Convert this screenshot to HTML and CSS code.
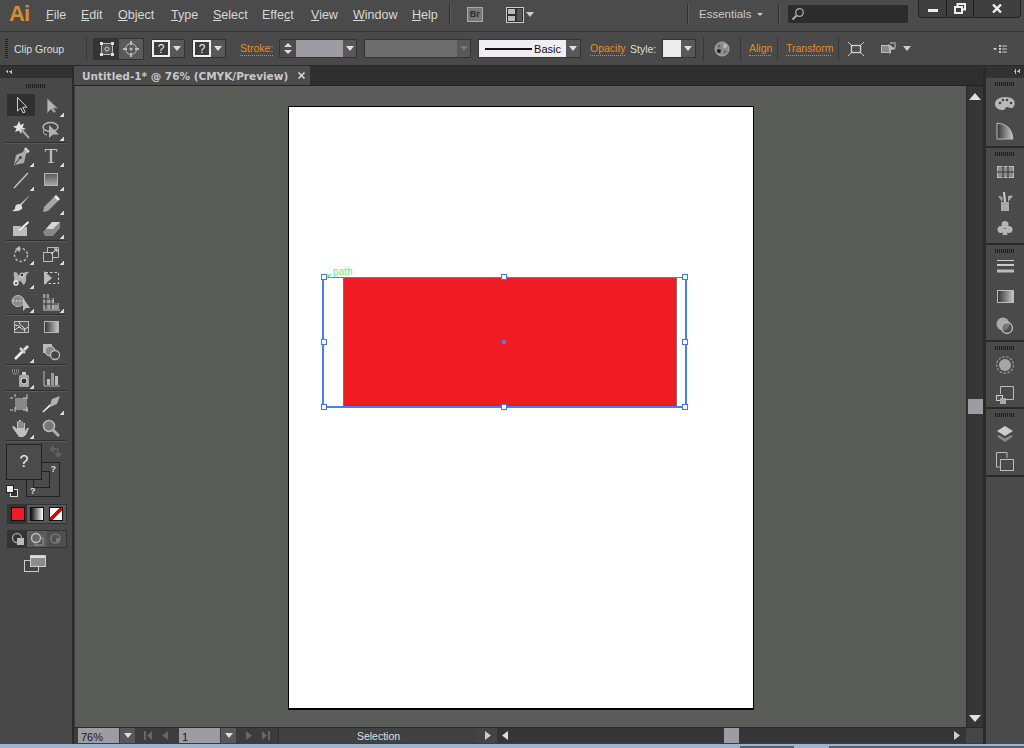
FILE: index.html
```html
<!DOCTYPE html>
<html lang="en">
<head>
<meta charset="utf-8">
<title>Adobe Illustrator</title>
<link rel="stylesheet" href="styles.css">
</head>
<body>
<svg class="defs" width="0" height="0"><defs>
<linearGradient id="gv" x1="0" y1="0" x2="0" y2="1"><stop offset="0" stop-color="#5a5a5a"/><stop offset="1" stop-color="#a8a8a8"/></linearGradient>
<linearGradient id="gh" x1="0" y1="0" x2="1" y2="0"><stop offset="0" stop-color="#333"/><stop offset="1" stop-color="#c8c8c8"/></linearGradient>
</defs></svg>
<div class="app">
<header class="menubar">
  <span class="logo">Ai</span>
  <nav class="menu">
    <span><u>F</u>ile</span><span><u>E</u>dit</span><span><u>O</u>bject</span><span><u>T</u>ype</span><span><u>S</u>elect</span><span>Effe<u>c</u>t</span><span><u>V</u>iew</span><span><u>W</u>indow</span><span><u>H</u>elp</span>
  </nav>
  <i class="vsep first"></i>
  <span class="br">Br</span>
  <svg class="layout" width="18" height="16" viewBox="0 0 18 16"><rect x=".5" y=".5" width="17" height="15" fill="#2f2f2f" stroke="#ccc"/><rect x="2" y="2" width="7" height="5" fill="#bbb"/><rect x="2" y="9" width="7" height="5" fill="#bbb"/><rect x="11" y="2" width="5" height="12" fill="#555"/></svg>
  <i class="tri wide"></i>
  <span class="spacer"></span>
  <i class="vsep"></i>
  <span class="workspace">Essentials</span>
  <i class="tri small"></i>
  <i class="vsep ws"></i>
  <div class="search"><svg width="14" height="14" viewBox="0 0 14 14"><circle cx="8.500" cy="5.500" r="3.800" fill="none" stroke="#aaa" stroke-width="1.300"/><path d="M5.500 8.500 1.500 12.500" stroke="#aaa" stroke-width="2"/></svg></div>
  <div class="winbtns">
    <span class="wb min"><i></i></span>
    <span class="wb res"><svg width="12" height="11" viewBox="0 0 12 11"><path d="M3.500 3V1H11V6.500H8" fill="none" stroke="#eee" stroke-width="2"/><rect x="1" y="4" width="7" height="6" fill="none" stroke="#eee" stroke-width="2"/></svg></span>
    <span class="wb cls"><svg width="10" height="9" viewBox="0 0 10 9"><path d="M1 0.500 9 8.500M9 0.500 1 8.500" stroke="#eee" stroke-width="2.400"/></svg></span>
  </div>
</header>

<section class="control">
  <i class="grip-v"></i>
  <span class="label clip">Clip Group</span>
  <i class="csep s1"></i>
  <div class="seg">
    <span class="seg-a"><svg width="16" height="16" viewBox="0 0 16 16"><rect x="2.500" y="2.500" width="11" height="11" rx="2" fill="#555" stroke="#bbb"/><circle cx="8" cy="8" r="2" fill="none" stroke="#ccc"/><path d="M1 1h3v3H1zM12 1h3v3h-3zM1 12h3v3H1zM12 12h3v3h-3z" fill="#ddd"/></svg></span>
    <span class="seg-b"><svg width="16" height="16" viewBox="0 0 16 16"><circle cx="8" cy="8" r="5.500" fill="none" stroke="#bbb"/><circle cx="8" cy="8" r="1.500" fill="#bbb"/><path d="M7 0h2v4H7zM7 12h2v4H7zM0 7h4v2H0zM12 7h4v2h-4z" fill="#bbb"/></svg></span>
  </div>
  <div class="qbox q1"><b>?</b><span class="dd"><i class="tri"></i></span></div>
  <div class="qbox q2"><b>?</b><span class="dd"><i class="tri"></i></span></div>
  <span class="link stroke">Stroke:</span>
  <div class="combo c-stroke">
    <span class="spin"><i class="tri up"></i><i class="tri"></i></span>
    <span class="cfield"></span>
    <span class="dd"><i class="tri"></i></span>
  </div>
  <div class="combo c-off">
    <span class="cfield off"></span>
    <span class="dd"><i class="tri dim"></i></span>
  </div>
  <div class="combo c-profile">
    <span class="profile"><i></i><em>Basic</em></span>
    <span class="dd"><i class="tri"></i></span>
  </div>
  <span class="link opacity">Opacity</span>
  <span class="label style">Style:</span>
  <div class="combo c-style"><span class="swatch"></span><span class="dd"><i class="tri"></i></span></div>
  <i class="csep s2"></i>
  <svg class="globe" width="16" height="16" viewBox="0 0 16 16"><circle cx="8" cy="8" r="7" fill="#8d8d8d" stroke="#aaa"/><circle cx="5" cy="10" r="2" fill="#222"/><circle cx="11" cy="5" r="2" fill="#bbb"/><circle cx="5" cy="5" r="1.500" fill="#666"/><circle cx="11" cy="11" r="1.500" fill="#666"/></svg>
  <i class="csep s3"></i>
  <span class="link align">Align</span>
  <i class="csep s4"></i>
  <span class="link transform">Transform</span>
  <i class="csep s5"></i>
  <svg class="ct1" width="16" height="14" viewBox="0 0 16 14"><rect x="3.500" y="3.500" width="9" height="7" fill="none" stroke="#ccc" stroke-width="1.400"/><path d="M0 0 3 3M16 0 13 3M0 14 3 11M16 14 13 11" stroke="#ccc"/></svg>
  <svg class="ct2" width="18" height="14" viewBox="0 0 18 14"><rect x="1.500" y="3.500" width="9" height="7" fill="#888" stroke="#bbb"/><path d="M10 1h5v5" fill="none" stroke="#888" stroke-width="2"/><path d="M8 2 16 7 11 8 10 13z" fill="#bbb"/></svg>
  <i class="tri big"></i>
  <svg class="cmenu" width="14" height="8" viewBox="0 0 14 8"><path d="M0 3h4L2 5.500z" fill="#ccc"/><path d="M6 0h2v2H6zM6 3h2v2H6zM6 6h2v2H6z" fill="#ccc"/><path d="M9 1h5M9 4h5M9 7h5" stroke="#ccc"/></svg>
</section>

<main class="work">
  <aside class="toolpanel">
    <div class="phead"><i class="chev"></i></div>
    <div class="pgrip"><i class="grip-h"></i></div>
    <div class="tools">
      <div class="trow tall">
        <span class="tool active"><svg width="20" height="20" viewBox="0 0 20 20"><path d="M6.500 2.500V16l3.300-3 2.300 5 2-1-2.300-4.800H16z" fill="#2b2b2b" stroke="#cfcfcf"/></svg></span>
        <span class="tool more"><svg width="20" height="20" viewBox="0 0 20 20"><path d="M6.500 3V16.500l3.500-3.500 3 3.500 1.500-1-2.700-3.500h4.500z" fill="#b4b4b4" stroke="#8a8a8a"/></svg></span>
      </div>
      <div class="trow">
        <span class="tool"><svg width="20" height="20" viewBox="0 0 20 20"><path d="M8 1 9.500 5 13 3.500 11.500 7.500 15 9 11 10 10 14 8 10.500 4 12 5.500 8.500 2 6.500 6 5.500z" fill="#e4e4e4"/><path d="M10 9 18 18" stroke="#aaa" stroke-width="2"/></svg></span>
        <span class="tool more"><svg width="20" height="20" viewBox="0 0 20 20"><ellipse cx="9.500" cy="7" rx="7.500" ry="4.500" fill="none" stroke="#bbb" stroke-width="1.400"/><path d="M8 5V18L12 14.500H18z" fill="#b0b0b0"/><path d="M3 10q-2 4 3 5" fill="none" stroke="#bbb"/></svg></span>
      </div>
      <i class="tsep"></i>
      <div class="trow">
        <span class="tool more"><svg width="20" height="20" viewBox="0 0 20 20"><path d="M14 2 18 6 15 8 13 17 3 19 5 9 12 6z" fill="#ababab"/><path d="M4 18 9 12" stroke="#333"/><circle cx="9.500" cy="11.500" r="1.300" fill="#333"/><path d="M14 2 18 6" stroke="#ddd" stroke-width="2"/></svg></span>
        <span class="tool more t-text">T</span>
      </div>
      <div class="trow">
        <span class="tool more"><svg width="20" height="20" viewBox="0 0 20 20"><path d="M3 18 17 3" stroke="#c8c8c8" stroke-width="1.300"/></svg></span>
        <span class="tool more"><svg width="20" height="20" viewBox="0 0 20 20"><rect x="3.500" y="3.500" width="13" height="12" fill="url(#gv)" stroke="#b5b5b5"/></svg></span>
      </div>
      <div class="trow">
        <span class="tool"><svg width="20" height="20" viewBox="0 0 20 20"><path d="M19 1 10 12 8 11z" fill="#c0c0c0"/><path d="M8 10q4 1 3 5-4 3-10 2 4-2 3-4 1-3 4-3z" fill="#ddd"/></svg></span>
        <span class="tool more"><svg width="20" height="20" viewBox="0 0 20 20"><path d="M13 3 17 7 7 17 2 18 3 13z" fill="#a5a5a5"/><path d="M13 3 15 1 19 5 17 7z" fill="#eee"/></svg></span>
      </div>
      <div class="trow">
        <span class="tool"><svg width="20" height="20" viewBox="0 0 20 20"><path d="M2 8H10L8 13 14 9H16V18H2z" fill="#bdbdbd"/><path d="M7 12 17 3 18 5 9 13z" fill="#eee"/></svg></span>
        <span class="tool more"><svg width="20" height="20" viewBox="0 0 20 20"><path d="M2 14 11 4H19V10L12 18H4z" fill="#888"/><path d="M11 4H19L12 11H5z" fill="#d5d5d5"/></svg></span>
      </div>
      <i class="tsep"></i>
      <div class="trow">
        <span class="tool more"><svg width="20" height="20" viewBox="0 0 20 20"><circle cx="10" cy="11" r="6.500" fill="none" stroke="#bbb" stroke-width="1.400" stroke-dasharray="2.500 2"/><path d="M4 5 9 2V8z" fill="#bbb"/></svg></span>
        <span class="tool more"><svg width="20" height="20" viewBox="0 0 20 20"><rect x="2.500" y="8.500" width="9" height="9" fill="none" stroke="#bbb"/><path d="M6.500 8.500V3.500H17.500V13.500H11.500" fill="none" stroke="#bbb"/><path d="M10 10 16 5M13 5h3v3" fill="none" stroke="#eee"/></svg></span>
      </div>
      <div class="trow">
        <span class="tool more"><svg width="20" height="20" viewBox="0 0 20 20"><path d="M3 4q4 0 4 3 3 1 5-1 2-3 6-2-3 2-3 6 1 5-3 7-1-4-4-4-3 2-6 2 2-3 1-6-1-3 0-5z" fill="#b0b0b0"/><circle cx="5" cy="15" r="2" fill="none" stroke="#eee" stroke-width="1.300"/><circle cx="11" cy="7" r="2" fill="#333" stroke="#eee"/></svg></span>
        <span class="tool"><svg width="20" height="20" viewBox="0 0 20 20"><rect x="4.500" y="4.500" width="13" height="11" fill="none" stroke="#ccc" stroke-dasharray="2.500 2"/><path d="M3 3V17L11 10z" fill="#bbb"/></svg></span>
      </div>
      <div class="trow">
        <span class="tool more"><svg width="20" height="20" viewBox="0 0 20 20"><ellipse cx="7" cy="9" rx="6" ry="5.500" fill="#8a8a8a" stroke="#bbb"/><path d="M2 9H13" stroke="#eee" stroke-dasharray="1.500 1.500"/><path d="M12 6V19L15 16H19z" fill="#bdbdbd"/></svg></span>
        <span class="tool more"><svg width="20" height="20" viewBox="0 0 20 20"><path d="M2 2H8V17H2z" fill="#999"/><path d="M8 6H13V17H8z" fill="#aaa"/><path d="M13 11H18V17H13z" fill="#999"/><path d="M2 7H12M2 12H17M5 2V17M10 6V17" stroke="#333"/><path d="M2 18H19" stroke="#ccc"/></svg></span>
      </div>
      <i class="tsep"></i>
      <div class="trow">
        <span class="tool"><svg width="20" height="20" viewBox="0 0 20 20"><rect x="3.500" y="3.500" width="14" height="11" fill="#555" stroke="#bbb"/><path d="M4 7q4 0 6 3t7-1M8 3q0 4 3 5t3 6M4 12q3-3 5-3" fill="none" stroke="#ddd"/></svg></span>
        <span class="tool"><svg width="20" height="20" viewBox="0 0 20 20"><rect x="3.500" y="3.500" width="14" height="11" fill="url(#gh)" stroke="#b5b5b5"/></svg></span>
      </div>
      <div class="trow">
        <span class="tool more"><svg width="20" height="20" viewBox="0 0 20 20"><path d="M12 9 4 17" stroke="#eee" stroke-width="2.500"/><path d="M9 6 14 11" stroke="#ccc" stroke-width="2.500"/><path d="M12 7 16 3 18 5 14 9z" fill="#ddd"/></svg></span>
        <span class="tool"><svg width="20" height="20" viewBox="0 0 20 20"><rect x="2" y="2" width="9" height="9" fill="#bbb"/><circle cx="9" cy="9" r="5" fill="#888" stroke="#ccc"/><circle cx="14" cy="13" r="4.500" fill="#444" stroke="#bbb" stroke-width="1.300"/></svg></span>
      </div>
      <i class="tsep"></i>
      <div class="trow">
        <span class="tool more"><svg width="20" height="20" viewBox="0 0 20 20"><rect x="8" y="7" width="10" height="12" rx="1" fill="#a5a5a5"/><circle cx="13" cy="13" r="3" fill="#333" stroke="#ddd"/><rect x="11" y="4" width="4" height="3" fill="#ccc"/><path d="M1 2h7M1 4h7M2 6h5" stroke="#bbb" stroke-dasharray="1 1"/></svg></span>
        <span class="tool"><svg width="20" height="20" viewBox="0 0 20 20"><path d="M3 3V18H19" fill="none" stroke="#bbb"/><rect x="6" y="11" width="3" height="6" fill="#bbb"/><rect x="10" y="5" width="3" height="12" fill="#999"/><rect x="14" y="8" width="3" height="9" fill="#bbb"/></svg></span>
      </div>
      <i class="tsep"></i>
      <div class="trow">
        <span class="tool"><svg width="22" height="20" viewBox="0 0 22 20"><rect x="5" y="4" width="12" height="12" fill="#888"/><path d="M5 0V19M17 0V19M0 4H22M0 16H22" stroke="#ccc" stroke-dasharray="3 10 5 10"/></svg></span>
        <span class="tool more"><svg width="20" height="20" viewBox="0 0 20 20"><path d="M2 18 9 11 11 5 19 2 16 10 9 13z" fill="#b0b0b0"/><path d="M2 18 9 11" stroke="#eee" stroke-width="1.500"/></svg></span>
      </div>
      <div class="trow">
        <span class="tool more"><svg width="20" height="20" viewBox="0 0 20 20"><path d="M1 9l2-1 3 3V3.500h2V2h2v1.500h2V5h2v8l2-3h2l-3 7-3 2H8z" fill="#c0c0c0"/><path d="M8 4V10M10 3V10M12 4V10" stroke="#555"/></svg></span>
        <span class="tool"><svg width="20" height="20" viewBox="0 0 20 20"><circle cx="8" cy="8" r="5.500" fill="#777" stroke="#bbb" stroke-width="1.500"/><path d="M12 12 18 18" stroke="#b0b0b0" stroke-width="3"/></svg></span>
      </div>
      <i class="tsep"></i>
    </div>
    <div class="fillstroke">
      <span class="fs-stroke"><i></i><b class="q a">?</b><b class="q b">?</b><b class="q c">?</b></span>
      <span class="fs-fill">?</span>
      <svg class="fs-swap" width="12" height="12" viewBox="0 0 12 12"><path d="M2 4H8V10M0 4 3 1.500V6.500zM8 12 5.500 9H10.500z" fill="none" stroke="#666" stroke-width="1.300"/></svg>
      <span class="fs-def"><i></i><em></em></span>
    </div>
    <div class="modes">
      <span class="mode on"><i class="m-red"></i></span>
      <span class="mode"><i class="m-grad"></i></span>
      <span class="mode"><i class="m-none"></i></span>
    </div>
    <div class="draws">
      <span class="dm on"><svg width="14" height="14" viewBox="0 0 14 14"><circle cx="6" cy="6" r="4.500" fill="none" stroke="#999" stroke-width="1.500"/><rect x="6" y="6" width="7" height="7" fill="#bbb"/></svg></span>
      <span class="dm mid"><svg width="14" height="14" viewBox="0 0 14 14"><rect x="5" y="6" width="8" height="7" fill="#555" stroke="#999"/><circle cx="6" cy="6" r="4.500" fill="#666" stroke="#bbb" stroke-width="1.500"/></svg></span>
      <span class="dm"><svg width="14" height="14" viewBox="0 0 14 14"><circle cx="6.500" cy="6.500" r="4.500" fill="none" stroke="#777" stroke-width="1.500"/><rect x="7" y="6" width="4" height="4" fill="#777"/></svg></span>
    </div>
    <svg class="screen" width="22" height="17" viewBox="0 0 22 17"><rect x=".5" y="5.500" width="14" height="11" fill="#444" stroke="#ccc"/><rect x="6.500" y=".5" width="15" height="11" fill="#8c8c8c" stroke="#ccc"/><rect x="7" y="1" width="14" height="2" fill="#ddd"/></svg>
  </aside>
  <i class="gutter"></i>

  <div class="docwrap">
    <div class="tabs">
      <div class="tab"><span>Untitled-1* @ 76% (CMYK/Preview)</span><svg width="7" height="7" viewBox="0 0 7 7"><path d="M.5.500 6.500 6.500M6.500.500.5 6.500" stroke="#ddd" stroke-width="1.500"/></svg></div>
    </div>
    <div class="docmid">
      <div class="canvas">
        <div class="artboard">
          <div class="redrect"></div>
          <div class="bbox"><i class="h tl"></i><i class="h tc"></i><i class="h tr"></i><i class="h ml"></i><i class="c"></i><i class="h mr"></i><i class="h bl"></i><i class="h bc"></i><i class="h br"></i></div>
          <span class="smart-x">×</span><span class="smart">path</span>
        </div>
      </div>
      <div class="vscroll"><i class="tri up lg"></i><span class="thumb"></span><i class="tri lg"></i></div>
    </div>
    <div class="status">
      <div class="sfield zoom"><span>76%</span></div><span class="sdd"><i class="tri"></i></span>
      <div class="navbtns n1"><svg width="8" height="9" viewBox="0 0 8 9"><path d="M0 0h2v9H0zM8 0v9L3 4.500z" fill="#666"/></svg><svg width="6" height="9" viewBox="0 0 6 9"><path d="M6 0v9L0 4.500z" fill="#666"/></svg></div>
      <div class="sfield page"><span>1</span></div><span class="sdd"><i class="tri"></i></span>
      <div class="navbtns n2"><svg width="6" height="9" viewBox="0 0 6 9"><path d="M0 0v9L6 4.500z" fill="#666"/></svg><svg width="8" height="9" viewBox="0 0 8 9"><path d="M0 0v9L5 4.500zM6 0h2v9H6z" fill="#666"/></svg></div>
      <div class="stat-text">Selection</div>
      <span class="stat-arrow"><svg width="6" height="9" viewBox="0 0 6 9"><path d="M0 0v9L6 4.500z" fill="#ccc"/></svg></span>
      <div class="hscroll">
        <svg width="6" height="9" viewBox="0 0 6 9"><path d="M6 0v9L0 4.500z" fill="#ddd"/></svg>
        <span class="hthumb"></span>
        <svg width="6" height="9" viewBox="0 0 6 9"><path d="M0 0v9L6 4.500z" fill="#ccc"/></svg>
      </div>
      <span class="corner"></span>
    </div>
  </div>
  <i class="gutter right"></i>

  <aside class="dock">
    <div class="phead end"><i class="chev"></i></div>
    <div class="dsec s-a">
      <i class="grip-h"></i>
      <svg width="20" height="16" viewBox="0 0 20 16"><path d="M10 1C4 1 0 4 0 8s4 6 8 6c3 0 2-3 4-3s5 3 7-1 0-9-9-9z" fill="#b8b8b8"/><circle cx="5" cy="7" r="1.300" fill="#444"/><circle cx="8" cy="4" r="1.300" fill="#444"/><circle cx="12" cy="4" r="1.300" fill="#444"/><circle cx="16" cy="7" r="1.300" fill="#444"/></svg>
      <svg width="18" height="18" viewBox="0 0 18 18"><path d="M1 1Q16 2 17 17H1z" fill="url(#gh)" stroke="#bbb"/></svg>
    </div>
    <div class="dsec s-b">
      <i class="grip-h"></i>
      <svg width="17" height="12" viewBox="0 0 17 12"><rect x=".5" y=".5" width="16" height="11" fill="#8a8a8a" stroke="#bbb"/><path d="M6 0V12M11 0V12M0 6H17" stroke="#333"/></svg>
      <svg width="16" height="20" viewBox="0 0 16 20"><rect x="4" y="11" width="8" height="9" fill="#a8a8a8"/><path d="M7 11 6 1h2l1 10z" fill="#ccc"/><path d="M5 11 1 5q3-1 5 2z" fill="#999"/><path d="M11 11 11 5q3-1 5 0z" fill="#aaa"/></svg>
      <svg width="16" height="16" viewBox="0 0 16 16"><circle cx="8" cy="4.500" r="3.500" fill="#b5b5b5"/><circle cx="4" cy="9.500" r="3.500" fill="#b5b5b5"/><circle cx="12" cy="9.500" r="3.500" fill="#b5b5b5"/><path d="M7 9H9L10.500 15H5.500z" fill="#b5b5b5"/></svg>
    </div>
    <div class="dsec s-c">
      <i class="grip-h"></i>
      <svg width="17" height="13" viewBox="0 0 17 13"><path d="M0 .5H17" stroke="#ccc"/><path d="M0 5H17" stroke="#ccc" stroke-width="2"/><path d="M0 11H17" stroke="#bbb" stroke-width="3"/></svg>
      <svg width="17" height="13" viewBox="0 0 17 13"><rect x=".5" y=".5" width="16" height="12" fill="url(#gh)" stroke="#bbb"/></svg>
      <svg width="18" height="18" viewBox="0 0 18 18"><circle cx="7" cy="7" r="6.500" fill="#aaa"/><circle cx="11" cy="11" r="5.500" fill="#555" fill-opacity=".6" stroke="#bbb" stroke-width="1.300"/></svg>
    </div>
    <div class="dsec s-d">
      <i class="grip-h"></i>
      <svg width="18" height="18" viewBox="0 0 18 18"><circle cx="9" cy="9" r="8.300" fill="none" stroke="#999" stroke-width="1.200" stroke-dasharray="2.500 1.500"/><circle cx="9" cy="9" r="6" fill="#a5a5a5"/></svg>
      <svg width="18" height="18" viewBox="0 0 18 18"><path d="M4.500 8V.5H17.500V13.500H10" fill="none" stroke="#bbb"/><rect x=".5" y="9.500" width="6" height="5" fill="#555" stroke="#ccc"/><rect x="4" y="12" width="6" height="6" fill="#aaa"/></svg>
    </div>
    <div class="dsec s-e">
      <i class="grip-h"></i>
      <svg width="18" height="18" viewBox="0 0 18 18"><path d="M9 0 17 5 9 10 1 5z" fill="#ccc"/><path d="M3 9 1 10.500 9 16 17 10.500 15 9 9 12.500z" fill="#888"/></svg>
      <svg width="18" height="19" viewBox="0 0 18 19"><path d="M4 15H.5V.5H11V6" fill="none" stroke="#bbb"/><rect x="4.500" y="7.500" width="13" height="11" fill="none" stroke="#bbb"/></svg>
    </div>
    <div class="dfill"></div>
  </aside>
</main>
<footer class="taskstrip"><i class="t1"></i><i class="t2"></i></footer>
</div>
</body>
</html>
```
FILE: styles.css
```css
* { box-sizing: border-box; }
html, body { margin: 0; padding: 0; background: #4a4a4a; }
body { font-family: "Open Sans", "Liberation Sans", sans-serif; font-size: 11px; color: #ddd; overflow: hidden; }
i, em, b { font-style: normal; font-weight: normal; display: block; }
svg { display: block; flex: none; }
.defs { position: absolute; }
.app { width: 1024px; height: 748px; display: flex; flex-direction: column; overflow: hidden; }

/* triangles */
.tri { width: 0; height: 0; border-left: 4px solid transparent; border-right: 4px solid transparent; border-top: 5px solid #e0e0e0; flex: none; }
.tri.up { border-top: 0; border-bottom: 5px solid #e0e0e0; }
.tri.dim { border-top-color: #777; }
.tri.small { border-left-width: 3px; border-right-width: 3px; border-top-width: 3px; border-top-color: #ccc; margin-left: 7px; margin-top: -2px; }
.tri.wide { margin-left: 2px; border-top-color: #ccc; margin-top: -3px; }
.tri.big { margin-left: 5px; border-top-color: #ccc; }
.tri.lg { border-left-width: 6px; border-right-width: 6px; border-top-width: 7px; }
.tri.up.lg { border-top-width: 0; border-bottom-width: 7px; }

/* menubar */
.menubar { height: 32px; flex: none; display: flex; align-items: center; background: #4b4b4b; border-bottom: 1px solid #333; position: relative; }
.logo { font: bold 22px "Liberation Sans", sans-serif; color: #cf8f35; margin-left: 9px; width: 20px; letter-spacing: -1px; margin-top: -3px; }
.menu { display: flex; margin-left: 17px; font: 12.500px "Liberation Sans", sans-serif; color: #d8d8d8; margin-top: -1px; }
.menu span:nth-child(1) { width: 35px; }
.menu span:nth-child(2) { width: 37px; }
.menu span:nth-child(3) { width: 53px; }
.menu span:nth-child(4) { width: 42px; }
.menu span:nth-child(5) { width: 49px; }
.menu span:nth-child(6) { width: 49px; }
.menu span:nth-child(7) { width: 42px; }
.menu span:nth-child(8) { width: 59px; }
.vsep { width: 1px; height: 20px; background: #303030; box-shadow: 1px 0 #5a5a5a; flex: none; }
.vsep.first { margin-left: 11px; margin-top: -3px; }
.vsep.ws { margin-left: 15px; }
.br { width: 16px; height: 15px; margin-left: 17px; background: #777; border: 1px solid #aaa; font: bold 9px "Liberation Sans", sans-serif; color: #2c2c2c; text-align: center; line-height: 13px; margin-top: -2px; }
.layout { margin-left: 23px; margin-top: -2px; }
.spacer { flex: 1; }
.workspace { font: 11.500px "Liberation Sans", sans-serif; color: #c8c8c8; margin-left: 11px; margin-top: -3px; width: 51px; white-space: nowrap; }
.menubar > .vsep { margin-top: -3px; }
.search { width: 120px; height: 18px; margin-left: 9px; background: #2c2c2c; border-radius: 2px; padding: 2px 3px; margin-top: -3px; }
.winbtns { display: flex; height: 18px; margin-left: 10px; margin-right: 3px; align-self: flex-start; background: #3f3f3f; border: 1px solid #222; border-top: 0; border-radius: 0 0 4px 4px; width: 103px; }
.wb { display: flex; align-items: center; justify-content: center; border-right: 1px solid #222; height: 100%; }
.wb.min { width: 28px; }
.wb.min i { width: 10px; height: 3px; background: #eee; margin-top: 4px; }
.wb.res { width: 27px; }
.wb.cls { flex: 1; border-right: 0; }

/* control bar */
.control { height: 34px; flex: none; display: flex; align-items: center; background: repeating-conic-gradient(#4c4c4c 0 25%, #474747 0 50%) 0 0 / 2px 2px; border-bottom: 1px solid #2a2a2a; }
.grip-v { width: 3px; height: 20px; margin-left: 5px; background: repeating-linear-gradient(#222 0 1px, transparent 1px 2px); }
.label { font: 10.500px "Liberation Sans", sans-serif; color: #ddd; white-space: nowrap; }
.label.clip { margin-left: 6px; width: 50px; }
.csep { width: 1px; height: 24px; background: #383838; flex: none; }
.s1 { margin-left: 22px; }
.seg { display: flex; width: 51px; height: 22px; margin-left: 6px; border: 1px solid #333; }
.seg span { display: flex; align-items: center; justify-content: center; }
.seg-a { width: 25px; background: #353535; }
.seg-b { flex: 1; background: #5a5a5a; }
.qbox { display: flex; width: 34px; height: 19px; border: 1px solid #333; background: #555; }
.qbox b { width: 18px; background: #3d3d3d; border: 2px solid #f0f0f0; color: #eee; font: 12px "Liberation Sans", sans-serif; text-align: center; line-height: 14px; }
.q1 { margin-left: 7px; }
.q2 { margin-left: 7px; }
.dd { display: flex; align-items: center; justify-content: center; flex: 1; background: #585858; }
.link { font: 10.500px "Liberation Sans", sans-serif; color: #e98a1f; white-space: nowrap; border-bottom: 1px dotted #e98a1f; line-height: 13px; }
.link.stroke { margin-left: 14px; width: 33px; }
.combo { display: flex; height: 19px; border: 1px solid #333; background: #555; }
.c-stroke { margin-left: 6px; width: 78px; }
.spin { width: 16px; display: flex; flex-direction: column; align-items: center; justify-content: space-around; background: #4c4c4c; padding: 1px 0; }
.spin .tri { border-left-width: 4px; border-right-width: 4px; border-top-width: 4px; }
.spin .tri.up { border-top-width: 0; border-bottom-width: 4px; }
.cfield { width: 47px; background: #9e9ca2; }
.c-off { margin-left: 7px; width: 107px; }
.cfield.off { width: 92px; background: #6e6e6e; }
.c-profile { margin-left: 7px; width: 103px; }
.profile { width: 87px; background: #f0eef2; display: flex; align-items: center; justify-content: space-between; padding-left: 6px; padding-right: 5px; }
.profile i { width: 47px; height: 2px; background: #111; }
.profile em { font: 11px "Liberation Sans", sans-serif; color: #111; }
.link.opacity { margin-left: 9px; width: 35px; }
.label.style { margin-left: 5px; width: 24px; }
.c-style { margin-left: 8px; width: 34px; }
.swatch { width: 18px; background: #efeaf0; }
.s2 { margin-left: 7px; }
.globe { margin-left: 10px; }
.s3 { margin-left: 10px; }
.link.align { margin-left: 8px; width: 22px; }
.s4 { margin-left: 6px; }
.link.transform { margin-left: 8px; width: 45px; }
.s5 { margin-left: 7px; }
.ct1 { margin-left: 9px; }
.ct2 { margin-left: 16px; }
.cmenu { margin-left: 82px; }

/* work */
.work { flex: 1; display: flex; min-height: 0; background: #3a3a3a; }
.toolpanel { width: 72px; flex: none; background: repeating-conic-gradient(#4a4a4a 0 25%, #464646 0 50%) 0 0 / 2px 2px; }
.gutter { width: 2px; flex: none; background: #2a2a2a; }
.gutter.right { width: 3px; background: #2a2a2a; }
.phead { height: 11px; background: #323232; display: flex; align-items: center; padding-left: 5px; }
.phead.end { justify-content: flex-end; padding-right: 4px; }
.chev { width: 7px; height: 5px; background: linear-gradient(135deg, transparent 50%, #bbb 50%) 0 0 / 3px 3px no-repeat, linear-gradient(45deg, transparent 50%, #bbb 50%) 0 100% / 3px 3px no-repeat, linear-gradient(135deg, transparent 50%, #bbb 50%) 4px 0 / 3px 3px no-repeat, linear-gradient(45deg, transparent 50%, #bbb 50%) 4px 100% / 3px 3px no-repeat; }
.pgrip { height: 16px; display: flex; justify-content: center; align-items: center; border-top: 1px solid #2f2f2f; }
.grip-h { width: 20px; height: 4px; flex: none; background: repeating-linear-gradient(90deg, #1c1c1c 0 1px, transparent 1px 2px); }
.tools { padding-left: 6px; padding-right: 6px; }
.trow { display: flex; height: 24px; margin-left: 0; }
.trow.tall { height: 25px; }
.tool { width: 30px; height: 100%; display: flex; align-items: center; justify-content: center; position: relative; }
.tool.active { background: #303030; height: 22px; margin-top: 1px; width: 28px; margin-left: 1px; margin-right: 1px; }
.tool.more::after { content: ""; position: absolute; right: 2px; bottom: 1px; width: 4px; height: 4px; background: linear-gradient(135deg, transparent 50%, #d8d8d8 50%); }
.t-text { font: 21px "Liberation Serif", serif; color: #c4c4c4; }
.tsep { height: 1px; background: #2f2f2f; box-shadow: 0 1px #5a5a5a; margin-bottom: 1px; }

.fillstroke { position: relative; height: 58px; margin-top: 3px; }
.fs-fill { position: absolute; left: 6px; top: 0; width: 36px; height: 36px; background: #4b4b4b; border: 1px solid #222; color: #eee; font: 16px "Liberation Sans", sans-serif; display: flex; align-items: center; justify-content: center; }
.fs-stroke { position: absolute; left: 26px; top: 18px; width: 34px; height: 35px; background: #4b4b4b; border: 1px solid #222; }
.fs-stroke > i { position: absolute; left: 6px; top: 8px; width: 17px; height: 17px; border: 1px solid #222; }
.q { position: absolute; color: #ddd; font: bold 9px "Liberation Sans", sans-serif; }
.q.a { right: 3px; top: 1px; }
.q.b { bottom: 0; left: 3px; }
.q.c { right: 3px; bottom: 0; }
.fs-swap { position: absolute; left: 50px; top: 1px; }
.fs-def { position: absolute; left: 6px; top: 41px; width: 12px; height: 12px; }
.fs-def em { position: absolute; left: 4px; top: 4px; width: 8px; height: 8px; background: #333; border: 1px solid #ddd; }
.fs-def i { position: absolute; left: 0; top: 0; width: 8px; height: 8px; background: #eee; border: 1px solid #222; z-index: 1; }
.modes { display: flex; margin: 2px 0 0 7px; width: 60px; height: 20px; border: 1px solid #333; }
.mode { width: 20px; display: flex; align-items: center; justify-content: center; background: #585858; }
.mode.on { background: #333; }
.mode i { width: 14px; height: 14px; border: 1px solid #111; }
.m-red { background: #ee1c25; }
.m-grad { background: linear-gradient(90deg, #111, #fff); }
.m-none { background: linear-gradient(135deg, #fff 0 40%, #e00 40% 60%, #fff 60%); }
.draws { display: flex; margin: 6px 0 0 7px; width: 60px; height: 18px; border: 1px solid #333; }
.dm { width: 20px; display: flex; align-items: center; justify-content: center; background: #4f4f4f; }
.dm.on { background: #333; }
.dm.mid { background: #5c5c5c; }
.screen { margin: 7px 0 0 24px; }

/* document */
.docwrap { flex: 1; min-width: 0; display: flex; flex-direction: column; }
.tabs { height: 20px; flex: none; background: #2f2f2f; display: flex; border-bottom: 1px solid #222; }
.tab { width: 236px; height: 19px; background: #4c4c4c; display: flex; align-items: center; padding-left: 8px; gap: 11px; }
.tab span { font: bold 10.500px "DejaVu Sans", sans-serif; color: #c8c8c8; white-space: nowrap; width: 205px; }
.docmid { flex: 1; min-height: 0; display: flex; }
.canvas { flex: 1; background: #5a5c58; position: relative; padding: 20px 0 0 213px; border-left: 1px solid #3c3c3c; }
.artboard { width: 466px; height: 604px; background: #fff; border: 1px solid #000; border-bottom-width: 2px; position: relative; }
.redrect { position: absolute; left: 54px; top: 170px; width: 334px; height: 129px; background: #f01c24; border-left: 1px solid #8a6a6a; border-right: 1px solid #8a6a6a; border-bottom: 1px solid #555; }
.bbox { position: absolute; left: 33px; top: 170px; width: 365px; height: 131px; border: 1px solid #4a7df0; border-width: 1px 2px 2px 2px; }
.h { position: absolute; width: 6px; height: 6px; background: #fff; border: 1px solid #3a78e8; }
.tl { left: -3px; top: -4px; } .tc { left: 177px; top: -4px; } .tr { right: -3px; top: -4px; }
.ml { left: -3px; top: 61px; } .mr { right: -3px; top: 61px; }
.bl { left: -3px; bottom: -4px; } .bc { left: 177px; bottom: -4px; } .br { right: -3px; bottom: -4px; }
.c { position: absolute; left: 178px; top: 62px; width: 4px; height: 4px; background: #4a7df0; }
.smart { position: absolute; left: 44px; top: 159px; font: 10px "Liberation Sans", sans-serif; color: #5cf45c; }
.smart-x { position: absolute; left: 37px; top: 164px; font: bold 9px "Liberation Sans", sans-serif; color: #5cf45c; }
.vscroll { width: 17px; flex: none; background: repeating-conic-gradient(#383838 0 25%, #333 0 50%) 0 0 / 2px 2px; border-left: 1px solid #2a2a2a; display: flex; flex-direction: column; align-items: center; padding: 7px 0 5px; position: relative; justify-content: space-between; }
.thumb { position: absolute; left: 1px; top: 313px; width: 15px; height: 15px; background: #9e9ca2; }
.status { height: 17px; flex: none; display: flex; background: #3c3c3c; border-top: 1px solid #2a2a2a; padding-left: 4px; }
.sfield { background: #9e9ca2; color: #1a1a1a; font: 11px "Liberation Sans", sans-serif; padding: 3px 0 0 3px; height: 15px; overflow: hidden; }
.sfield.zoom { width: 41px; }
.sfield.page { width: 41px; }
.sdd { width: 15px; height: 15px; background: #585858; display: flex; align-items: center; justify-content: center; margin-left: 1px; }
.navbtns { display: flex; align-items: center; gap: 10px; height: 15px; }
.n1 { width: 44px; padding-left: 9px; }
.n2 { width: 42px; padding-left: 10px; }
.stat-text { width: 200px; font: 10.500px "Liberation Sans", sans-serif; color: #e0e0e0; text-align: center; line-height: 17px; height: 15px; background: repeating-conic-gradient(#444 0 25%, #3e3e3e 0 50%) 0 0 / 2px 2px; border-left: 1px solid #2f2f2f; }
.stat-arrow { width: 19px; display: flex; align-items: center; justify-content: center; height: 15px; background: #444; }
.hscroll { flex: 1; display: flex; align-items: center; height: 15px; background: repeating-conic-gradient(#383838 0 25%, #333 0 50%) 0 0 / 2px 2px; padding: 0 6px 0 5px; justify-content: space-between; position: relative; }
.hthumb { position: absolute; left: 227px; top: 0; width: 15px; height: 15px; background: #9e9ca2; }
.corner { width: 17px; height: 15px; background: #454545; flex: none; }
.dock { width: 38px; flex: none; background: #4a4a4a; display: flex; flex-direction: column; }
.dsec { display: flex; flex-direction: column; align-items: center; border-bottom: 2px solid #2a2a2a; padding-top: 4px; }
.s-a { height: 71px; gap: 10px; border-top: 1px solid #333; }
.s-b { height: 97px; gap: 10px; }
.s-b svg:nth-of-type(2) { margin-top: 3px; }
.s-b svg:nth-of-type(3) { margin-top: -1px; }
.s-c { height: 97px; gap: 7px; }
.s-c svg:nth-of-type(2) { margin-top: 10px; }
.s-c svg:nth-of-type(3) { margin-top: 7px; }
.s-d { height: 67px; gap: 6px; }
.s-d svg:nth-of-type(2) { margin-top: 6px; }
.s-e { height: 68px; gap: 9px; }
.s-e svg:nth-of-type(2) { margin-top: -1px; }
.dfill { flex: 1; }
.taskstrip { height: 4px; flex: none; background: #9db4d0; position: relative; }
.taskstrip i { position: absolute; bottom: 0; height: 2px; background: #4e5f78; }
.t1 { left: 740px; width: 54px; }
.t2 { left: 829px; width: 195px; }
```
